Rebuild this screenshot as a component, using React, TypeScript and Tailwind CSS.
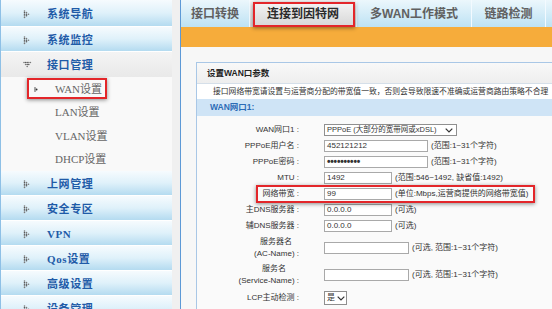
import React from "react";

const SERIF = "font-['Liberation_Serif','Noto_Sans_CJK_SC',serif]";
const SANS = "font-['Liberation_Sans','Noto_Sans_CJK_SC',sans-serif]";

function DotArrow({ down = false }: { down?: boolean }) {
  const pts: [number, number][] = [
    [1.5, 1],
    [1.5, 2.6],
    [3.5, 2.6],
    [3.5, 4.2],
    [5.5, 4.2],
    [1.5, 4.2],
    [1.5, 5.8],
    [3.5, 5.8],
    [1.5, 7.4],
  ];
  return (
    <svg width="9" height="9" viewBox="0 0 9 9" className="shrink-0">
      {pts.map(([x, y], i) => (
        <circle
          key={i}
          cx={down ? y : x}
          cy={down ? x : y}
          r="0.8"
          fill={i % 2 ? "#5a5a5a" : "#7a7a7a"}
        />
      ))}
    </svg>
  );
}

function MainItem({ label, first = false }: { label: string; first?: boolean }) {
  return (
    <div
      className={`${first ? "h-[27px]" : "h-[25px]"} shrink-0 border-b border-white bg-linear-to-b from-[#f6fbfe] via-[#dff1fa] to-[#b4dbf0] flex items-center pt-[2px] pl-[22px]`}
    >
      <DotArrow />
      <span className={`ml-[15px] text-[11px] font-bold tracking-[0.6px] text-[#1f5ba8] ${SERIF}`}>{label}</span>
    </div>
  );
}

function SubItem({ label, active = false }: { label: string; active?: boolean }) {
  return (
    <div className="relative h-[23.5px] flex items-center">
      {active && (
        <>
          <svg width="5" height="5" viewBox="0 0 5 5" className="absolute left-[33px] top-[10px]">
            <circle cx="1" cy="1" r="0.8" fill="#444" />
            <circle cx="2.6" cy="2.5" r="0.9" fill="#333" />
            <circle cx="1" cy="4" r="0.8" fill="#444" />
            <circle cx="1" cy="2.5" r="0.7" fill="#666" />
          </svg>
          <div className="absolute left-[26px] top-[1px] w-[80px] h-[21px] border-2 border-[#e3262a] shadow-[0_1px_4px_rgba(0,0,0,0.45)]" />
        </>
      )}
      <span className={`ml-[54px] text-[11px] text-[#666] ${SERIF}`}>{label}</span>
    </div>
  );
}

function Tab({
  label,
  w,
  active = false,
}: {
  label: string;
  w: string;
  active?: boolean;
}) {
  return (
    <div
      className={`${w} relative h-full shrink-0 border-r border-[#f3faff] flex items-center justify-center ${
        active ? "bg-linear-to-b from-[#f7f7f7] to-[#d6d6d6]" : ""
      }`}
    >
      <span
        className={`text-[12px] font-bold ${SANS} ${active ? "text-[#2b2b2b]" : "text-[#606060]"}`}
      >
        {label}
      </span>
      {active && (
        <div className="absolute left-[3px] top-[2px] w-[102px] h-[25px] border-2 border-[#e3262a] shadow-[0_1px_4px_rgba(0,0,0,0.45)]" />
      )}
    </div>
  );
}

function Chevron() {
  return (
    <svg width="8" height="5" viewBox="0 0 8 5" className="shrink-0">
      <path d="M0.7 0.7 L4 4 L7.3 0.7" stroke="#333" strokeWidth="1.2" fill="none" />
    </svg>
  );
}

function Field({ w, value = "", dots = false }: { w: string; value?: string; dots?: boolean }) {
  return (
    <div
      className={`${w} h-[12px] shrink-0 border border-[#a9a9a9] bg-white pl-[2px] flex items-center text-[#333] leading-none ${
        dots ? "text-[10px] font-bold tracking-[-0.2px]" : "text-[8px]"
      }`}
    >
      {value}
    </div>
  );
}

function Hint({ children }: { children: React.ReactNode }) {
  return <span className="ml-[3px] text-[8px] text-[#333] whitespace-nowrap">{children}</span>;
}

function Row({
  label,
  children,
  h = "h-[16px]",
}: {
  label: React.ReactNode;
  children: React.ReactNode;
  h?: string;
}) {
  return (
    <div className={`${h} flex items-center`}>
      <div className="w-[102px] shrink-0 text-right text-[8px] text-[#333] leading-[12px] whitespace-nowrap">
        {label}
      </div>
      <div className="ml-[25px] flex items-center">{children}</div>
    </div>
  );
}

export default function App() {
  return (
    <div className={`w-[552px] h-[309px] overflow-hidden flex bg-[#f0f0f0] ${SANS}`}>
      <aside className="w-[172px] shrink-0 h-full border-l border-[#8ec0e6] flex flex-col">
        <MainItem label="系统导航" first />
        <MainItem label="系统监控" />
        <div className="h-[25px] shrink-0 bg-linear-to-b from-[#f4f4f4] to-[#e9e9e9] flex items-center pt-[2px] pl-[22px]">
          <DotArrow down />
          <span className={`ml-[15px] text-[11px] font-bold tracking-[0.6px] text-[#1f5ba8] ${SERIF}`}>接口管理</span>
        </div>
        <div className="bg-[#f9f9f9] flex flex-col">
          <SubItem label="WAN设置" active />
          <SubItem label="LAN设置" />
          <SubItem label="VLAN设置" />
          <SubItem label="DHCP设置" />
        </div>
        <MainItem label="上网管理" />
        <MainItem label="安全专区" />
        <MainItem label="VPN" />
        <MainItem label="Qos设置" />
        <MainItem label="高级设置" />
        <MainItem label="设备管理" />
      </aside>

      <main className="ml-[8px] flex-1 h-full border-l border-[#5d99d6] flex flex-col bg-[#f7f7f7] min-w-0">
        <div className="h-[27px] shrink-0 flex bg-linear-to-b from-[#ecf7fc] to-[#bde2f4]">
          <Tab label="接口转换" w="w-[69px]" />
          <Tab label="连接到因特网" w="w-[107px]" active />
          <Tab label="多WAN工作模式" w="w-[115px]" />
          <Tab label="链路检测" w="w-[74px]" />
          <div className="flex-1" />
        </div>
        <div className="h-[20px] shrink-0 bg-[#f6ac3b]" />

        <div className="pl-[15px] pt-[15px] flex-1 min-w-0">
          <div className="border-l border-t border-[#a9c7e6] bg-[#fafafa] h-full">
            <div className="h-[21px] flex items-center pl-[10px] bg-linear-to-b from-[#f8f8f8] to-[#eeeeee] border-b border-[#d5dfe9]">
              <span className="text-[8.5px] font-bold text-[#222]">设置WAN口参数</span>
            </div>
            <div className="h-[15px] flex items-center pl-[16px] bg-white whitespace-nowrap">
              <span className="text-[7.8px] text-[#333]">
                接口网络带宽请设置与运营商分配的带宽值一致，否则会导致限速不准确或运营商路由策略不合理
              </span>
            </div>
            <div className="h-[17px] flex items-center pl-[13px] bg-[#cfe4f6]">
              <span className="text-[8.5px] font-bold text-[#2d6cb6]">WAN网口1:</span>
            </div>

            <div className="pt-[6px] flex flex-col">
              <Row label="WAN网口1 :">
                <div className="w-[133px] h-[12px] border border-[#8f8f8f] bg-white flex items-center justify-between pl-[2px] pr-[3px]">
                  <span className="text-[7.5px] text-[#333] leading-none whitespace-nowrap">
                    PPPoE (大部分的宽带网或xDSL)
                  </span>
                  <Chevron />
                </div>
              </Row>
              <Row label="PPPoE用户名 :">
                <Field w="w-[104px]" value="452121212" />
                <Hint>(范围:1~31个字符)</Hint>
              </Row>
              <Row label="PPPoE密码 :">
                <Field w="w-[104px]" value="••••••••••" dots />
                <Hint>(范围:1~31个字符)</Hint>
              </Row>
              <Row label="MTU :">
                <Field w="w-[68px]" value="1492" />
                <Hint>(范围:546~1492, 缺省值:1492)</Hint>
              </Row>
              <div className="relative">
                <Row label="网络带宽 :">
                  <Field w="w-[68px]" value="99" />
                  <Hint>(单位:Mbps,运营商提供的网络带宽值)</Hint>
                </Row>
                <div className="absolute left-[59px] top-[-1px] w-[279px] h-[18px] border-2 border-[#e3262a] shadow-[0_1px_4px_rgba(0,0,0,0.45)]" />
              </div>
              <Row label="主DNS服务器 :">
                <Field w="w-[68px]" value="0.0.0.0" />
                <Hint>(可选)</Hint>
              </Row>
              <Row label="辅DNS服务器 :">
                <Field w="w-[68px]" value="0.0.0.0" />
                <Hint>(可选)</Hint>
              </Row>
              <Row
                h="h-[28px]"
                label={
                  <>
                    <div className="pr-[7px]">服务器名</div>
                    <div>(AC-Name) :</div>
                  </>
                }
              >
                <Field w="w-[85px]" />
                <Hint>(可选, 范围:1~31个字符)</Hint>
              </Row>
              <Row
                h="h-[26px]"
                label={
                  <>
                    <div className="pr-[13px]">服务名</div>
                    <div>(Service-Name) :</div>
                  </>
                }
              >
                <Field w="w-[85px]" />
                <Hint>(可选, 范围:1~31个字符)</Hint>
              </Row>
              <Row h="h-[20px]" label="LCP主动检测 :">
                <div className="w-[23px] h-[14px] border border-[#8f8f8f] bg-white flex items-center justify-between pl-[2px] pr-[1px]">
                  <span className="text-[8px] text-[#333] leading-none">是</span>
                  <Chevron />
                </div>
              </Row>
            </div>
          </div>
        </div>
      </main>
    </div>
  );
}
